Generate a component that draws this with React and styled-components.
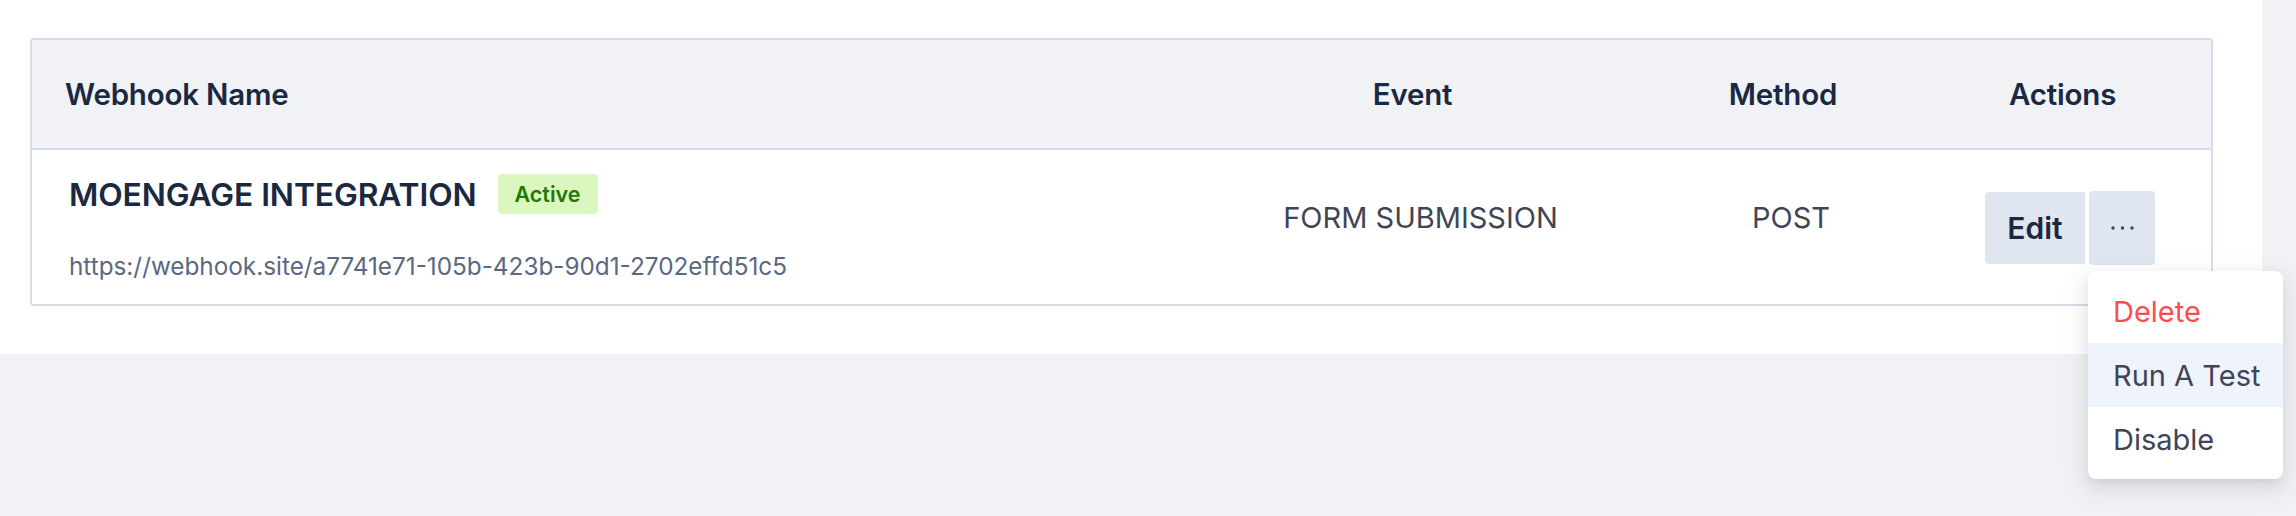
import React from "react";
import styled, { createGlobalStyle } from "styled-components";

const Global = createGlobalStyle`
  html, body { margin: 0; padding: 0; background: #f0f2f5; }
  body { font-family: Inter, "Noto Sans", sans-serif; -webkit-font-smoothing: antialiased; }
  * { box-sizing: border-box; }
`;

const Page = styled.div`
  min-height: 100vh;
  background: #f0f2f5;
`;

const Panel = styled.div`
  width: 2262px;
  background: #ffffff;
  padding: 38px 49px 48px 30px;
`;

const Table = styled.div`
  border: 2px solid #d5dde8;
  border-radius: 4px;
  background: #ffffff;
`;

const Row = styled.div`
  display: grid;
  grid-template-columns: 1193px 375px 366px 1fr;
  background: ${(p) => (p.$head ? "#f0f2f6" : "#ffffff")};
  height: ${(p) => (p.$head ? "110px" : "154px")};
  border-bottom: ${(p) => (p.$head ? "2px solid #d5dde8" : "none")};
  border-radius: ${(p) => (p.$head ? "3px 3px 0 0" : "0")};
`;

const HeadCell = styled.div`
  display: flex;
  align-items: center;
  justify-content: ${(p) => p.$align || "center"};
  padding-left: ${(p) => p.$pl || 0}px;
  font-size: 29.5px;
  font-weight: 600;
  color: #1b2841;
  letter-spacing: -0.2px;
`;

const Cell = styled.div`
  display: flex;
  flex-direction: column;
  align-items: ${(p) => p.$align || "center"};
  padding-top: ${(p) => p.$pt || 0}px;
  padding-left: ${(p) => p.$pl || 0}px;
`;

const TitleLine = styled.div`
  display: flex;
  align-items: center;
  gap: 21px;
  height: 40px;
`;

const Title = styled.span`
  font-size: 31.8px;
  font-weight: 600;
  color: #1b2841;
  letter-spacing: -0.1px;
`;

const Badge = styled.span`
  display: inline-flex;
  align-items: center;
  height: 40px;
  padding: 0 17px;
  background: #d9f7be;
  color: #237804;
  border-radius: 4px;
  font-size: 21.5px;
  font-weight: 600;
`;

const Url = styled.div`
  margin-top: 36px;
  font-size: 24.3px;
  line-height: 32px;
  color: #5a6882;
`;

const Text = styled.span`
  font-size: 29px;
  line-height: 36px;
  color: #3f4556;
  font-weight: 400;
`;

const Actions = styled.div`
  display: flex;
  align-items: flex-start;
  gap: 4px;
`;

const Btn = styled.button`
  border: none;
  margin: ${(p) => (p.$more ? "-1px 0 0" : "0")};
  width: ${(p) => (p.$more ? "66px" : "100px")};
  height: ${(p) => (p.$more ? "74px" : "72px")};
  background: #dfe6ef;
  border-radius: ${(p) => (p.$more ? "4px" : "4px 0 0 4px")};
  font-family: inherit;
  font-size: 30px;
  font-weight: 600;
  color: #1b2841;
  display: flex;
  align-items: center;
  justify-content: center;
  padding: 0;
  cursor: pointer;
`;

const MoreWrap = styled.div`
  position: relative;
`;

const Menu = styled.div`
  position: absolute;
  top: calc(100% + 6px);
  left: -1px;
  width: 195px;
  padding: 8px 0;
  background: #ffffff;
  border-radius: 8px;
  box-shadow: 0 6px 16px rgba(0, 0, 0, 0.08), 0 3px 6px -4px rgba(0, 0, 0, 0.12),
    0 9px 28px 8px rgba(0, 0, 0, 0.05);
  z-index: 10;
`;

const MenuItem = styled.div`
  height: 64px;
  display: flex;
  align-items: center;
  padding-left: 25px;
  font-size: 29px;
  color: ${(p) => (p.$danger ? "#ff4d4f" : "#3f4556")};
  background: ${(p) => (p.$active ? "#eff4fc" : "transparent")};
  white-space: nowrap;
`;

const Dots = () => (
  <svg width="23" height="6" viewBox="0 0 23 6">
    <circle cx="2" cy="3" r="1.7" fill="#3f4556" />
    <circle cx="11.5" cy="3" r="1.7" fill="#3f4556" />
    <circle cx="21" cy="3" r="1.7" fill="#3f4556" />
  </svg>
);

export default function App() {
  return (
    <Page>
      <Global />
      <Panel>
        <Table>
          <Row $head>
            <HeadCell $align="flex-start" $pl={33}>Webhook Name</HeadCell>
            <HeadCell>Event</HeadCell>
            <HeadCell>Method</HeadCell>
            <HeadCell $align="flex-start" $pl={43}>Actions</HeadCell>
          </Row>
          <Row>
            <Cell $align="flex-start" $pl={37} $pt={24}>
              <TitleLine>
                <Title>MOENGAGE INTEGRATION</Title>
                <Badge>Active</Badge>
              </TitleLine>
              <Url>https://webhook.site/a7741e71-105b-423b-90d1-2702effd51c5</Url>
            </Cell>
            <Cell $pt={50} $pl={16}>
              <Text>FORM SUBMISSION</Text>
            </Cell>
            <Cell $pt={50} $pl={16}>
              <Text>POST</Text>
            </Cell>
            <Cell $align="flex-start" $pt={42} $pl={19}>
              <Actions>
                <Btn>Edit</Btn>
                <MoreWrap>
                  <Btn $more aria-label="More">
                    <Dots />
                  </Btn>
                  <Menu>
                    <MenuItem $danger>Delete</MenuItem>
                    <MenuItem $active>Run A Test</MenuItem>
                    <MenuItem>Disable</MenuItem>
                  </Menu>
                </MoreWrap>
              </Actions>
            </Cell>
          </Row>
        </Table>
      </Panel>
    </Page>
  );
}
